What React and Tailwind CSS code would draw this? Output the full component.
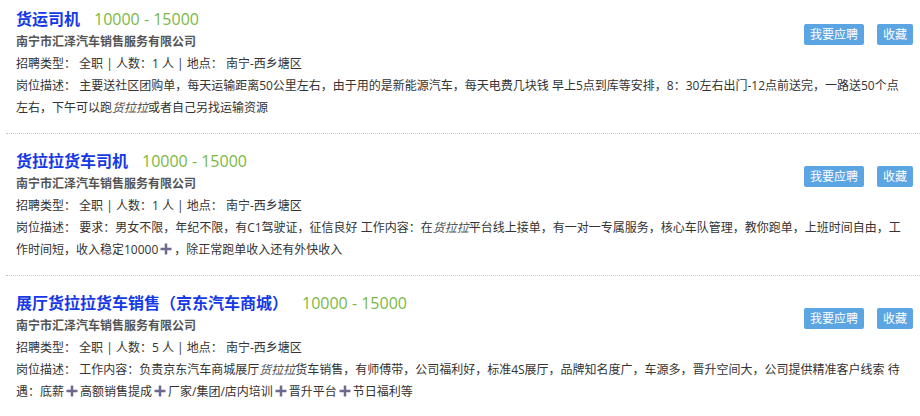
const Plus = () => (
  <svg viewBox="0 0 12 12" className="inline-block w-[12px] h-[12px] mx-[2px] align-[-1px]">
    <rect x="0.5" y="4.75" width="11" height="2.5" fill="#6e6a8e" />
    <rect x="4.75" y="0.5" width="2.5" height="11" fill="#6e6a8e" />
  </svg>
);

const Brand = () => <em className="italic text-[#555]">货拉拉</em>;

const jobs = [
  {
    title: "货运司机",
    people: 1,
    desc: (
      <>
        主要送社区团购单，每天运输距离50公里左右，由于用的是新能源汽车，每天电费几块钱 早上5点到库等安排，8：30左右出门-12点前送完，一路送50个点左右，下午可以跑<Brand />或者自己另找运输资源
      </>
    ),
  },
  {
    title: "货拉拉货车司机",
    people: 1,
    desc: (
      <>
        要求：男女不限，年纪不限，有C1驾驶证，征信良好 工作内容：在<Brand />平台线上接单，有一对一专属服务，核心车队管理，教你跑单，上班时间自由，工作时间短，收入稳定10000<Plus />，除正常跑单收入还有外快收入
      </>
    ),
  },
  {
    title: "展厅货拉拉货车销售（京东汽车商城）",
    people: 5,
    desc: (
      <>
        工作内容：负责京东汽车商城展厅<Brand />货车销售，有师傅带，公司福利好，标准4S展厅，品牌知名度广，车源多，晋升空间大，公司提供精准客户线索 待遇：底薪<Plus />高额销售提成<Plus />厂家/集团/店内培训<Plus />晋升平台<Plus />节日福利等
      </>
    ),
  },
];

export default function App() {
  return (
    <div
      className="w-[920px] h-[416px] overflow-hidden bg-white text-[#333]"
      style={{ fontFamily: '"Open Sans", "Noto Sans CJK SC", sans-serif' }}
    >
      {jobs.map((job, i) => (
        <div
          key={job.title}
          className={`ml-[6px] pl-[10px] pr-[7px] pb-[14px] border-b border-dotted border-[#c8c8c8] ${i === 0 ? "pt-[8px]" : "pt-[16px]"}`}
        >
          <div className="flex items-start justify-between">
            <div>
              <div className="flex items-center leading-[23px]">
                <span className="text-[16px] font-bold text-[#1539e6]">{job.title}</span>
                <span className="ml-[14px] text-[16px] text-[#7ab845]">10000 - 15000</span>
              </div>
              <div className="text-[12px] leading-[22px] font-bold text-[#555]">南宁市汇泽汽车销售服务有限公司</div>
              <div className="text-[12px] leading-[22px]">招聘类型： 全职 | 人数：{job.people} 人 | 地点： 南宁-西乡塘区</div>
            </div>
            <div className="flex gap-[13px] mt-[16px]">
              <button className="h-[21px] px-[6px] rounded-[2px] bg-[#5ba5e3] text-white text-[12px] leading-[21px]">我要应聘</button>
              <button className="h-[21px] px-[6px] rounded-[2px] bg-[#5ba5e3] text-white text-[12px] leading-[21px]">收藏</button>
            </div>
          </div>
          <div className="text-[12px] leading-[22px] pr-[5px]">
            岗位描述： {job.desc}
          </div>
        </div>
      ))}
    </div>
  );
}
